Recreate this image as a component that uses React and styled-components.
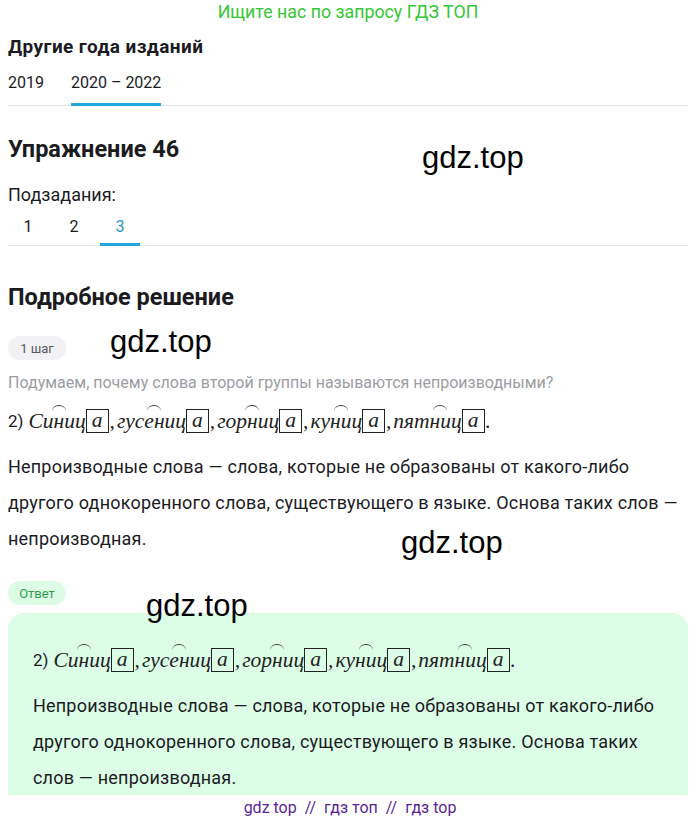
import React from "react";
import styled, { createGlobalStyle } from "styled-components";

const GlobalStyle = createGlobalStyle`
  html, body {
    margin: 0;
    padding: 0;
    background: #ffffff;
  }
  body {
    font-family: Roboto, "Liberation Sans", sans-serif;
    color: #1b1b1f;
    overflow: hidden;
  }
`;

// each word: letters before the arc, letters under it, letters after it
const words = [
  ["Си", "н", "иц"],
  ["гус", "ен", "иц"],
  ["гор", "н", "иц"],
  ["ку", "ни", "ц"],
  ["пят", "ни", "ц"]
];

const Parsing = ({ flush }) => (
  <ParseLine flush={flush}>
    <Num>2)</Num>
    {words.map(([pre, arc, post], i) => (
      <React.Fragment key={i}>
        <Word>
          {pre}
          <Arc>{arc}</Arc>
          {post}
        </Word>
        <Ending>а</Ending>
        <Punct last={i === words.length - 1}>{i < words.length - 1 ? "," : "."}</Punct>
      </React.Fragment>
    ))}
  </ParseLine>
);

const App = () => {
  return (
    <>
      <GlobalStyle />
      <Page>
        <Banner>Ищите нас по запросу ГДЗ ТОП</Banner>

        <SmallTitle>Другие года изданий</SmallTitle>
        <YearTabs>
          <YearTab>2019</YearTab>
          <YearTab active>2020 – 2022</YearTab>
        </YearTabs>

        <Title>Упражнение 46</Title>
        <Label>Подзадания:</Label>
        <SubTabs>
          <SubTab>1</SubTab>
          <SubTab>2</SubTab>
          <SubTab active>3</SubTab>
        </SubTabs>

        <SectionTitle>Подробное решение</SectionTitle>
        <Pill>1 шаг</Pill>
        <Question>Подумаем, почему слова второй группы называются непроизводными?</Question>
        <Parsing />
        <Paragraph>
          Непроизводные слова — слова, которые не образованы от какого-либо
          другого однокоренного слова, существующего в языке. Основа таких слов —
          непроизводная.
        </Paragraph>

        <Pill answer>Ответ</Pill>
        <AnswerBox>
          <Parsing flush />
          <Paragraph>
            Непроизводные слова — слова, которые не образованы от какого-либо
            другого однокоренного слова, существующего в языке. Основа таких
            слов — непроизводная.
          </Paragraph>
        </AnswerBox>

        <Watermark style={{ left: 422, top: 140 }}>gdz.top</Watermark>
        <Watermark style={{ left: 110, top: 324 }}>gdz.top</Watermark>
        <Watermark style={{ left: 401, top: 525 }}>gdz.top</Watermark>
        <Watermark style={{ left: 146, top: 588 }}>gdz.top</Watermark>
      </Page>
      <Footer>gdz top&nbsp; //&nbsp; гдз топ&nbsp; //&nbsp; гдз top</Footer>
    </>
  );
};

const Page = styled.div`
  position: relative;
  width: 680px;
  padding: 0 8px;
`;

const Banner = styled.div`
  text-align: center;
  color: #34c734;
  font-size: 17.8px;
  line-height: 24px;
`;

const SmallTitle = styled.h3`
  margin: 11px 0 0;
  font-size: 19px;
  font-weight: 700;
  letter-spacing: 0.4px;
  line-height: 24px;
`;

const YearTabs = styled.div`
  display: flex;
  gap: 27px;
  margin-top: 12px;
  border-bottom: 1px solid #e6e6e9;
`;

const YearTab = styled.div`
  font-size: 16px;
  line-height: 24px;
  padding-bottom: 8px;
  border-bottom: 3px solid ${(p) => (p.active ? "#22a6dd" : "transparent")};
  margin-bottom: -1px;
`;

const Title = styled.h2`
  margin: 29px 0 0;
  font-size: 23.5px;
  font-weight: 700;
  line-height: 28px;
`;

const SectionTitle = styled(Title)`
  margin-top: 37px;
`;

const Label = styled.div`
  margin-top: 20px;
  font-size: 18px;
  line-height: 24px;
`;

const SubTabs = styled.div`
  display: flex;
  gap: 6px;
  margin-top: 8px;
  border-bottom: 1px solid #e6e6e9;
`;

const SubTab = styled.div`
  width: 40px;
  text-align: center;
  font-size: 16px;
  line-height: 24px;
  padding-bottom: 4px;
  color: ${(p) => (p.active ? "#2a93cc" : "#1b1b1f")};
  border-bottom: 3px solid ${(p) => (p.active ? "#22a6dd" : "transparent")};
  margin-bottom: -1px;
`;

const Pill = styled.div`
  display: inline-flex;
  align-items: center;
  justify-content: center;
  width: 58px;
  height: 24px;
  margin-top: ${(p) => (p.answer ? "24px" : "25px")};
  border-radius: 12px;
  font-size: 13px;
  background: ${(p) => (p.answer ? "#dcfce6" : "#f2f2f4")};
  color: ${(p) => (p.answer ? "#2e9c4e" : "#55555c")};
`;

const Question = styled.div`
  margin-top: 11px;
  font-size: 16px;
  line-height: 24px;
  color: #9c9ca3;
`;

const ParseLine = styled.div`
  margin-top: ${(p) => (p.flush ? "0" : "10px")};
  height: 32px;
  white-space: nowrap;
  display: flex;
  align-items: center;
`;

const Num = styled.span`
  font-size: 17px;
  margin-right: 5px;
`;

const Word = styled.span`
  font-family: "Liberation Serif", serif;
  font-style: italic;
  font-size: 21.5px;
  color: #222;
`;

const Punct = styled(Word)`
  margin-right: ${(p) => (p.last ? "0" : "2px")};
  margin-left: 1px;
`;

const Arc = styled.span`
  position: relative;
  &::before {
    content: "";
    position: absolute;
    left: 50%;
    width: 14px;
    margin-left: -7px;
    top: -4px;
    height: 5px;
    border-top: 1px solid #333;
    border-radius: 50% 50% 0 0 / 100% 100% 0 0;
  }
`;

const Ending = styled.span`
  display: inline-block;
  box-sizing: border-box;
  height: 24px;
  line-height: 20px;
  padding: 0 5px;
  border: 1px solid #222;
  font-family: "Liberation Serif", serif;
  font-style: italic;
  font-size: 21.5px;
  color: #222;
`;

const Paragraph = styled.p`
  margin: 12px 0 0;
  font-size: 18px;
  letter-spacing: 0.2px;
  line-height: 36px;
`;

const AnswerBox = styled.div`
  margin-top: 8px;
  padding: 31px 25px 24px;
  background: #dcfde6;
  border-radius: 16px 16px 0 0;
`;

const Watermark = styled.div`
  position: absolute;
  font-family: "Liberation Sans", Arial, sans-serif;
  font-size: 31px;
  line-height: 36px;
  color: #000;
  pointer-events: none;
`;

const Footer = styled.div`
  position: fixed;
  left: 0;
  right: 0;
  bottom: 0;
  height: 28px;
  line-height: 26px;
  text-align: center;
  background: #ffffff;
  color: #5b1f98;
  font-size: 16px;
`;

export default App;
